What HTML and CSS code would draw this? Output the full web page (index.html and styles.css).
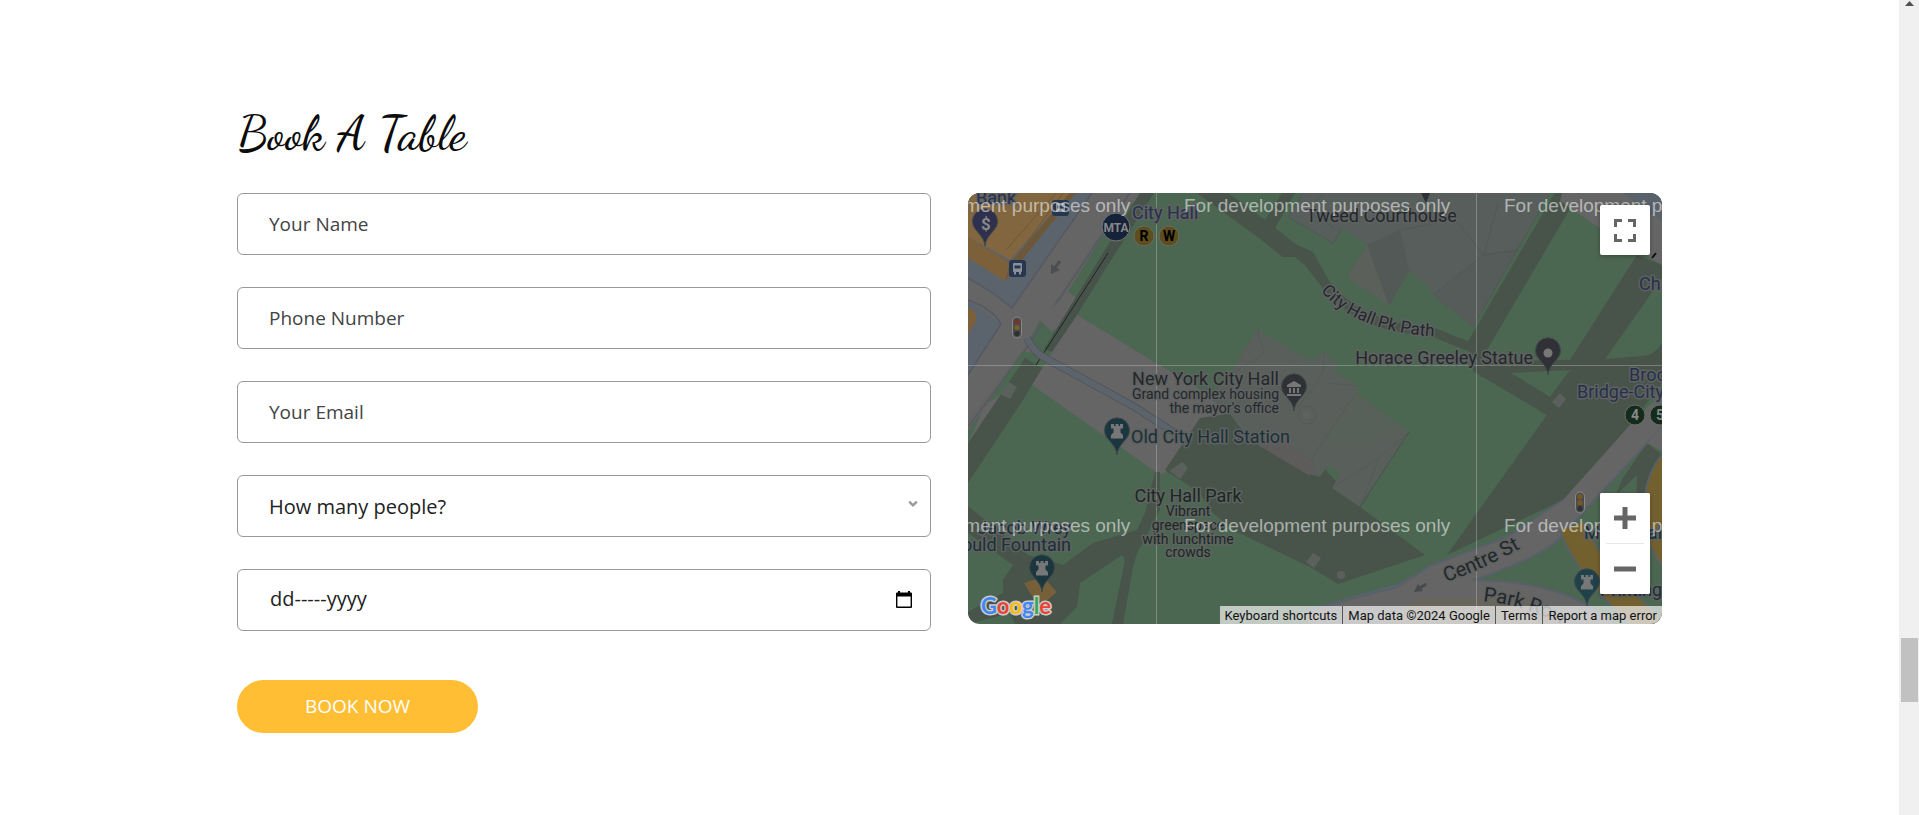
FILE: index.html
```html
<!DOCTYPE html>
<html lang="en">
<head>
<meta charset="utf-8">
<title>Book A Table</title>
<meta name="viewport" content="width=device-width, initial-scale=1">
<link rel="stylesheet" href="styles.css">
</head>
<body>
<div class="viewport">
  <main class="page">
    <section class="booking">
      <h2 class="booking-title">Book A Table</h2>
      <div class="booking-columns">
        <form class="booking-form">
          <input class="field" type="text" placeholder="Your Name" aria-label="Your Name">
          <input class="field" type="text" placeholder="Phone Number" aria-label="Phone Number">
          <input class="field" type="email" placeholder="Your Email" aria-label="Your Email">
          <div class="field-wrap">
            <select class="field field-select" aria-label="How many people?">
              <option>How many people?</option>
              <option>2</option>
              <option>3</option>
              <option>4</option>
              <option>5</option>
            </select>
            <svg class="chevron" width="10" height="8" viewBox="0 0 10 8"><path d="M1.2 1.6 5 5.4 8.800 1.6" fill="none" stroke="#999" stroke-width="2.400"/></svg>
          </div>
          <div class="field-wrap">
            <input class="field field-date" type="text" value="dd-----yyyy" aria-label="Date">
            <button class="calendar" type="button" aria-label="Open calendar">
              <svg width="16" height="17" viewBox="0 0 16 17"><path d="M2 0h2v1.500h8V0h2v1.500h1q1 0 1 1V16q0 1-1 1H1q-1 0-1-1V2.500q0-1 1-1h1zM1.400 5.500v10h13.200v-10z" fill="#000" fill-rule="evenodd"/></svg>
            </button>
          </div>
          <button class="submit" type="submit">BOOK NOW</button>
        </form>

        <div class="map">
          <svg class="map-canvas" viewBox="0 0 694 431" preserveAspectRatio="xMidYMid slice" role="img" aria-label="Map of City Hall Park">
            <rect width="694" height="431" fill="#4b6651"/>
            <!-- west side blocks and Broadway -->
            <path d="M0 0H184L100 127 0 258Z" fill="#656565"/>
            <path d="M160 0H174L140 42 100 99 109 105 84 139 72 127 55 159 0 240V226L55 157Z" fill="#636363"/>
            <path d="M135 42 174 0 190 0 109 105 100 99Z" fill="#4b6651"/>
            <path d="M135 42 174 0H160L128 48Z" fill="#656565"/>
            <path d="M72 127 88 137 78 160 60 150Z" fill="#4b6651"/>
            <path d="M0 0H124L44 115 25 100 0 85ZM0 107 33 131 0 182Z" fill="#5b636d"/>
            <path d="M0 85 25 100 44 115 124 0M0 107Q25 116 33 131L0 182M162 0 57 157 0 234" fill="none" stroke="#555962" stroke-width="1.500"/>
            <path d="M0 0H102L42 67 0 44Z" fill="#81663f"/>
            <path d="M0 44 42 70 37 88 0 65Z" fill="#7c6039"/>
            <path d="M102 0 42 70 37 88 45 78 108 0Z" fill="#6d5738"/>
            <path d="M0 114 8 120V128L0 141Z" fill="#7c6039"/>
            <path d="M88 0 38 57M95 0 60 48" stroke="#6f5838" fill="none"/>
            <!-- plaza south-west of City Hall -->
            <path d="M109 122 289 231 262 260 232 227 199 278Q193 283 188 279L64 192 84 159Z" fill="#656565"/>
            <path d="M100 99 109 105 84 139 72 127Z" fill="#656565"/>
            <path d="M55 159 70 160 78 170 17 212 0 250V238Z" fill="#4b6651"/>
            <path d="M172 0H186L138 75 109 122 84 159 76 156Z" fill="#47534a"/>
            <path d="M140 60 68 172" stroke="#1d2420"/>
            <path d="M57 165 74 175 55 207 0 290V250L29 207Z" fill="#48534a"/>
            <path d="M41 189 49 194 42 206 32 201Z" fill="#5b605d"/>
            <path d="M59 145Q66 160 79 166L165 213 210 242" fill="none" stroke="#51565d" stroke-width="8"/>
            <path d="M59 145Q66 160 79 166L165 213 210 242" fill="none" stroke="#5c636a" stroke-width="6"/>
            <path d="M92 68 86 76" stroke="#4b4f50" stroke-width="3"/><path d="M83 71V81L92 77Z" fill="#4b4f50"/>
            <!-- park paths -->
            <path d="M0 313 60 362 95 372 125 350 169 337 177 320 187 279H192V317L169 360 165 374 155 431H144L157 367 154 362 112 390 109 414 92 431H47L42 420 0 431V419L35 400V387L45 372 0 340Z" fill="#48534a"/>
            <path d="M197 277 232 225 300 215 392 314 457 362 370 391 342 374 265 337 245 320 232 300Z" fill="#48534a"/>
            <path d="M229 0 287 42 315 64H327L337 72 354 94 362 90 345 59 329 52 307 35 327 0H314L297 27 260 0Z" fill="#48534a"/>
            <path d="M357 90Q390 135 462 138L502 154 592 0H606L512 160 580 206" fill="none" stroke="#48534a" stroke-width="9"/>
            <path d="M502 152 592 0H608L514 155V185L502 170Z" fill="#48534a"/>
            <path d="M505 168 602 167 669 62 694 72V190L662 232 622 277 595 307 479 362 579 222 505 178Z" fill="#48534a"/>
            <path d="M543 180 602 177 582 204ZM694 85 637 166 675 163Q686 163 694 150Z" fill="#4b6651"/>
            <path d="M214 271 218 275 212 284 204 278Z" fill="#5b605d" stroke="#5b605d" stroke-width="3"/>
            <path d="M345 360 353 365 346 375 338 369Z" fill="#5b605d"/><circle cx="373" cy="382" r="4" fill="#5b605d"/>
            <path d="M592 200 598 206 591 215 584 209Z" fill="#5b605d"/>
            <!-- buildings -->
            <path d="M289 136 343 168 356 159 369 170 367 179 391 193 388 200 441 239 392 314 364 295 372 280 360 272 352 284 342 281 290 252 270 232 259 217 240 205 262 182Z" fill="#595f5b"/>
            <path d="M289 136 300 155 343 180 386 204 350 260 294 230 262 182Z" fill="#5b5f5b"/>
            <path d="M294 230 347 270 342 283 290 252Z" fill="#5e5b5b"/>
            <path d="M388 200 441 239 410 250 350 255Z" fill="#576059"/>
            <path d="M289 136 296 160 262 182M356 160 355 180 330 215M391 193 360 190M441 239 411 265 392 314M388 200 342 268M411 265 364 295" fill="none" stroke="#545b56"/>
            <path d="M441 239 392 314" stroke="#4a514d"/>
            <circle cx="339" cy="222" r="9" fill="#5a5f5b" stroke="#535956"/><circle cx="339" cy="222" r="4" fill="#5f635f"/>
            <path d="M335 0 320 24 365 50 374 35 399 52 379 84 421 112 441 77 462 95 465 102 505 134 550 57 572 17 582 0Z" fill="#585e5b"/>
            <path d="M399 52 379 84 421 112 407 75 432 37Z" fill="#5b605a"/><path d="M432 37 399 52 421 112 441 77Z" fill="#525957"/>
            <path d="M505 134 550 57 516 60 465 102Z" fill="#555c59"/>
            <path d="M335 0 320 24 365 50 374 35M421 112 441 77M505 134 572 17M516 62 490 30M516 62 550 57M516 62 465 102M516 62 530 10M432 37 470 30M355 0 340 18 366 35" fill="none" stroke="#515855"/>
            <!-- streets on the east side -->
            <path d="M594 0H694V72L627 32 592 8Z" fill="#656565"/><path d="M655 0H694V28Z" fill="#59616b"/>
            <path d="M684 65 688 60" stroke="#111" stroke-width="2"/>
            <path d="M600 335 694 250V431H560Z" fill="#4b6651"/>
            <path d="M679 250 694 262 682 300 640 320 655 285Z" fill="#48534a"/>
            <path d="M669 282 650 300 668 315Z" fill="#4b6651"/>
            <path d="M340 416 429 391 462 373V431H340Z" fill="#5b636d"/>
            <path d="M340 420 429 394 462 373 539 344 595 307 662 232 694 200V234L629 304 595 342Q575 364 505 387 600 388 645 431H340Z" fill="#656565"/>
            <path d="M350 414 429 394 462 373 539 344 595 307M694 234 629 304 595 342Q575 364 505 387 600 388 645 431" fill="none" stroke="#59606a" stroke-width="2"/>
            <path d="M450 405 560 405 600 431H420Z" fill="#6c6656" opacity=".5"/>
            <path d="M679 250 694 234V258Z" fill="#656565"/>
            <path d="M604 333Q618 375 690 440" fill="none" stroke="#59606a" stroke-width="27"/>
            <path d="M604 333Q618 375 690 440" fill="none" stroke="#73602f" stroke-width="24"/>
            <ellipse cx="715" cy="317" rx="39" ry="65" fill="#73602f" stroke="#59606a" stroke-width="2"/>
            <path d="M458 391 449 397" stroke="#464b4c" stroke-width="3"/><path d="M450 391 446 399 455 398Z" fill="#464b4c"/>
            <path d="M75 384 89 399 76 410 66 406 56 390Z" fill="#75603a"/>

            <!-- tile seams -->
            <path d="M188.500 0V431M508.500 0V431M0 172.500H694" stroke="#fff" stroke-opacity=".25"/>

            <!-- transit markers -->
            <g fill="#26374f"><rect x="41" y="67" width="17" height="17" rx="3"/><rect x="84" y="7" width="17" height="16" rx="3"/></g>
            <rect x="45" y="70" width="9" height="9" rx="1" fill="#8b9099"/><path d="M47 79v2.500M52 79v2.500" stroke="#8b9099" stroke-width="2"/><path d="M46.500 74h6" stroke="#26374f" stroke-width="3"/>
            <rect x="88" y="10" width="9" height="9" rx="1" fill="#8b9099"/><path d="M89.500 14h6" stroke="#26374f" stroke-width="3"/>
            <circle cx="148" cy="34" r="14" fill="#15233a" stroke="#777"/>
            <text class="mta" x="148" y="39">MTA</text>
            <circle cx="176" cy="43" r="10" fill="#5e4d1d" stroke="#6b6a60"/><circle cx="201" cy="43" r="10" fill="#5e4d1d" stroke="#6b6a60"/>
            <text class="line" x="176" y="48">R</text><text class="line" x="201" y="48">W</text>
            <circle cx="667" cy="222" r="10" fill="#142c1c" stroke="#6a6a6a"/><circle cx="692" cy="222" r="10" fill="#142c1c" stroke="#6a6a6a"/>
            <text class="line line-light" x="667" y="227">4</text><text class="line line-light" x="692" y="227">5</text>
            <g stroke="#8a8a8a"><rect x="44.500" y="124" width="9" height="21" rx="4.500" fill="#4a4b4e"/><rect x="607.500" y="299" width="9" height="21" rx="4.500" fill="#4a4b4e"/></g>
            <circle cx="49" cy="128.500" r="2.600" fill="#7b312d"/><circle cx="49" cy="134.500" r="2.600" fill="#766122"/><circle cx="49" cy="140.500" r="2.600" fill="#2e3032"/>
            <circle cx="612" cy="303.500" r="2.600" fill="#7b571f"/><circle cx="612" cy="309.500" r="2.600" fill="#7b571f"/><circle cx="612" cy="315.500" r="2.600" fill="#2e3032"/>

            <!-- place pins -->
            <defs><path id="pin" d="M0 0C-1-8-5-11-9-16A12.500 12.500 0 1 1 9-16C5-11 1-8 0 0Z"/>
            <path id="rook" d="M-6-33h3v2h1.500v-2h3v2H3v-2h3v4.500h-2.500v4l2.500 2.500v3.500H-6v-3.500l2.500-2.500v-4H-6z"/></defs>
            <g stroke-width="1" stroke="#3f4a4a">
              <use href="#pin" x="17" y="53" fill="#2e304d"/>
              <use href="#pin" x="326" y="218" fill="#303136"/>
              <use href="#pin" x="580" y="182" fill="#303136"/>
              <use href="#pin" x="149" y="262" fill="#1c363f"/>
              <use href="#pin" x="74" y="399" fill="#1c363f"/>
              <use href="#pin" x="619" y="413" fill="#1f4149"/>
            </g>
            <path d="M453 0H462L458 10Z" fill="#303136"/>
            <text class="dollar" x="18" y="37">$</text>
            <circle cx="580" cy="160" r="4.500" fill="#777"/>
            <g fill="#777"><use href="#rook" x="149" y="264"/><use href="#rook" x="74" y="401"/><use href="#rook" x="619" y="415"/>
            <path d="M319 192l7-4 7 4v2h-14zM321 195h2v5h-2zM325 195h2v5h-2zM329 195h2v5h-2zM319 201h14v2h-14z"/></g>

            <!-- place names -->
            <g class="labels">
              <text class="navy" x="8" y="11">Bank</text>
              <text class="navy" x="164" y="26">City Hall</text>
              <text x="338" y="29">Tweed Courthouse</text>
              <text x="565" y="171" text-anchor="end">Horace Greeley Statue</text>
              <text x="311" y="192" text-anchor="end">New York City Hall</text>
              <g class="small" text-anchor="end"><text x="311" y="206">Grand complex housing</text><text x="311" y="220">the mayor's office</text></g>
              <text class="teal" x="163" y="250">Old City Hall Station</text>
              <text class="leaf" x="220" y="309" text-anchor="middle">City Hall Park</text>
              <g class="small leaf" text-anchor="middle"><text x="220" y="323">Vibrant</text><text x="220" y="337">greenspace</text><text x="220" y="351">with lunchtime</text><text x="220" y="364">crowds</text></g>
              <text class="teal" x="103" y="341" text-anchor="end">Jacob Wrey</text>
              <text class="teal" x="103" y="358" text-anchor="end">Gould Fountain</text>
              <text class="navy" x="671" y="97">Chambers St</text>
              <text class="navy" x="661" y="188">Brooklyn</text>
              <text class="navy" x="609" y="205">Bridge-City Hall</text>
              <text class="teal" x="616" y="346">Municipal</text>
              <text class="teal" x="632" y="403">Printing</text>
              <path id="path-name" d="M353 98Q390 142 480 144" fill="none" stroke="none"/>
              <text class="walk"><textPath href="#path-name">City Hall Pk Path</textPath></text>
              <path id="centre-name" d="M478 389Q522 374 572 344" fill="none" stroke="none"/>
              <text class="street"><textPath href="#centre-name">Centre St</textPath></text>
              <path id="park-name" d="M515 408Q565 413 610 440" fill="none" stroke="none"/>
              <text class="street"><textPath href="#park-name">Park Row</textPath></text>
            </g>
            <g class="watermark">
              <text x="-104" y="19">For development purposes only</text><text x="216" y="19">For development purposes only</text><text x="536" y="19">For development purposes only</text>
              <text x="-104" y="339">For development purposes only</text><text x="216" y="339">For development purposes only</text><text x="536" y="339">For development purposes only</text>
            </g>
          </svg>
          <button class="map-control fullscreen" type="button" aria-label="Toggle fullscreen view">
            <svg width="22" height="23" viewBox="0 0 22 23"><path d="M1.500 8V1.500H8M14 1.500H20.500V8M20.500 15V21.500H14M8 21.500H1.500V15" fill="none" stroke="#666" stroke-width="3"/></svg>
          </button>
          <div class="zoom">
            <button class="map-control" type="button" aria-label="Zoom in"><svg width="22" height="22" viewBox="0 0 22 22"><path d="M11 0V22M0 11H22" stroke="#666" stroke-width="5"/></svg></button>
            <hr class="zoom-divider">
            <button class="map-control" type="button" aria-label="Zoom out"><svg width="22" height="22" viewBox="0 0 22 22"><path d="M0 11H22" stroke="#666" stroke-width="5"/></svg></button>
          </div>
          <a class="google" href="#" aria-label="Google Maps"><span class="g-blue">G</span><span class="g-red">o</span><span class="g-yellow">o</span><span class="g-blue">g</span><span class="g-green">l</span><span class="g-red">e</span></a>
          <div class="credits">
            <button class="credit" type="button">Keyboard shortcuts</button>
            <span class="credit">Map data ©2024 Google</span>
            <a class="credit" href="#">Terms</a>
            <a class="credit" href="#">Report a map error</a>
          </div>
        </div>
      </div>
    </section>
  </main>
  <div class="scrollbar" aria-hidden="true">
    <svg class="scroll-up" width="9" height="5" viewBox="0 0 9 5"><path d="M0 5 4.500 0 9 5Z" fill="#505050"/></svg>
    <div class="scroll-thumb"></div>
  </div>
</div>
</body>
</html>
```

FILE: styles.css
```css
* {
  box-sizing: border-box;
}

body {
  margin: 0;
  background: #fff;
  color: #0c0c0c;
  font-family: "Open Sans", sans-serif;
  font-size: 19px;
}

.viewport {
  display: flex;
  height: 100vh;
  overflow: hidden;
}

.page {
  flex: 1;
  padding: 98px 24px 80px;
}

.booking {
  max-width: 1425px;
  margin: 0 auto;
}

.booking-title {
  margin: 0 0 23px;
  padding-left: 1px;
  font-family: "Dancing Script", "Liberation Serif", serif;
  font-size: 48px;
  font-weight: 500;
  line-height: 72px;
}

.booking-columns {
  display: grid;
  grid-template-columns: 1fr 1fr;
  gap: 37px;
  align-items: start;
}

.booking-form {
  display: flex;
  flex-direction: column;
  gap: 32px;
}

.field-wrap {
  position: relative;
}

.field {
  display: block;
  width: 100%;
  height: 62px;
  padding: 0 31px;
  border: 1px solid #999;
  border-radius: 6px;
  background: #fff;
  color: #222;
  font: inherit;
}

.field::placeholder {
  color: #444;
  opacity: 1;
}

.field-select {
  appearance: none;
  font-size: 20px;
}

.field-date {
  padding-left: 32px;
  padding-bottom: 4px;
  font-size: 20px;
}

.chevron {
  position: absolute;
  top: 25px;
  right: 13px;
}

.calendar {
  position: absolute;
  top: 22px;
  right: 19px;
  display: flex;
  padding: 0;
  border: 0;
  background: none;
}

.submit {
  align-self: flex-start;
  margin-top: 17px;
  padding: 0 68px;
  border: 0;
  border-radius: 27px;
  background: #ffbe33;
  color: #fff;
  font: inherit;
  line-height: 53px;
}

.map {
  position: relative;
  height: 431px;
  border-radius: 12px;
  overflow: hidden;
}

.map-canvas {
  display: block;
  width: 100%;
  height: 100%;
}

.labels {
  fill: #23272b;
  stroke: #5f6261;
  stroke-width: 3px;
  stroke-linejoin: round;
  paint-order: stroke;
  font-family: Roboto, sans-serif;
  font-size: 18px;
}

.labels .small {
  font-size: 14px;
}

.labels .walk {
  font-size: 17px;
}

.labels .street {
  font-size: 20px;
}

.labels .navy {
  fill: #26304d;
}

.labels .teal {
  fill: #1b2f38;
}

.labels .leaf {
  fill: #18281f;
}

.watermark {
  fill: #fff;
  fill-opacity: 0.55;
  font-family: "Liberation Sans", Arial, sans-serif;
  font-size: 19px;
}

.mta,
.line,
.dollar {
  font-family: Roboto, sans-serif;
  font-size: 14px;
  font-weight: 700;
  text-anchor: middle;
}

.mta,
.line-light,
.dollar {
  fill: #888;
}

.mta {
  font-size: 12px;
}

.dollar {
  font-size: 17px;
}

.map-control {
  display: flex;
  align-items: center;
  justify-content: center;
  width: 50px;
  height: 50px;
  padding: 0;
  border: 0;
  border-radius: 2px;
  background: #fff;
}

.fullscreen {
  position: absolute;
  top: 12px;
  right: 12px;
  box-shadow: 0 1px 4px rgba(0, 0, 0, 0.3);
}

.zoom {
  position: absolute;
  right: 12px;
  bottom: 30px;
  border-radius: 2px;
  background: #fff;
  box-shadow: 0 1px 4px rgba(0, 0, 0, 0.3);
}

.zoom-divider {
  height: 1px;
  margin: 0 6px;
  border: 0;
  background: #e6e6e6;
}

.google {
  position: absolute;
  left: 13px;
  bottom: 5px;
  font-family: Lato, sans-serif;
  font-size: 22px;
  font-weight: 700;
  line-height: 26px;
  text-decoration: none;
  -webkit-text-stroke: 3px #ccc;
  paint-order: stroke fill;
}

.g-blue {
  color: #4285f4;
}

.g-red {
  color: #ea4335;
}

.g-yellow {
  color: #fbbc04;
}

.g-green {
  color: #34a853;
}

.credits {
  position: absolute;
  right: 0;
  bottom: 0;
  display: flex;
  background: rgba(245, 245, 245, 0.7);
}

.credit {
  padding: 1px 5px 0;
  border: 0;
  border-left: 1px solid #555;
  background: none;
  color: #111;
  font-family: Roboto, sans-serif;
  font-size: 13px;
  line-height: 17px;
  text-decoration: none;
}

.credit:first-child {
  border-left: 0;
}

.scrollbar {
  display: flex;
  flex-direction: column;
  width: 20px;
  padding: 1px 1px 0 2px;
  background: #f0f0f0;
}

.scroll-up {
  align-self: center;
}

.scroll-thumb {
  height: 64px;
  margin-top: 632px;
  background: #c1c1c1;
}
```
